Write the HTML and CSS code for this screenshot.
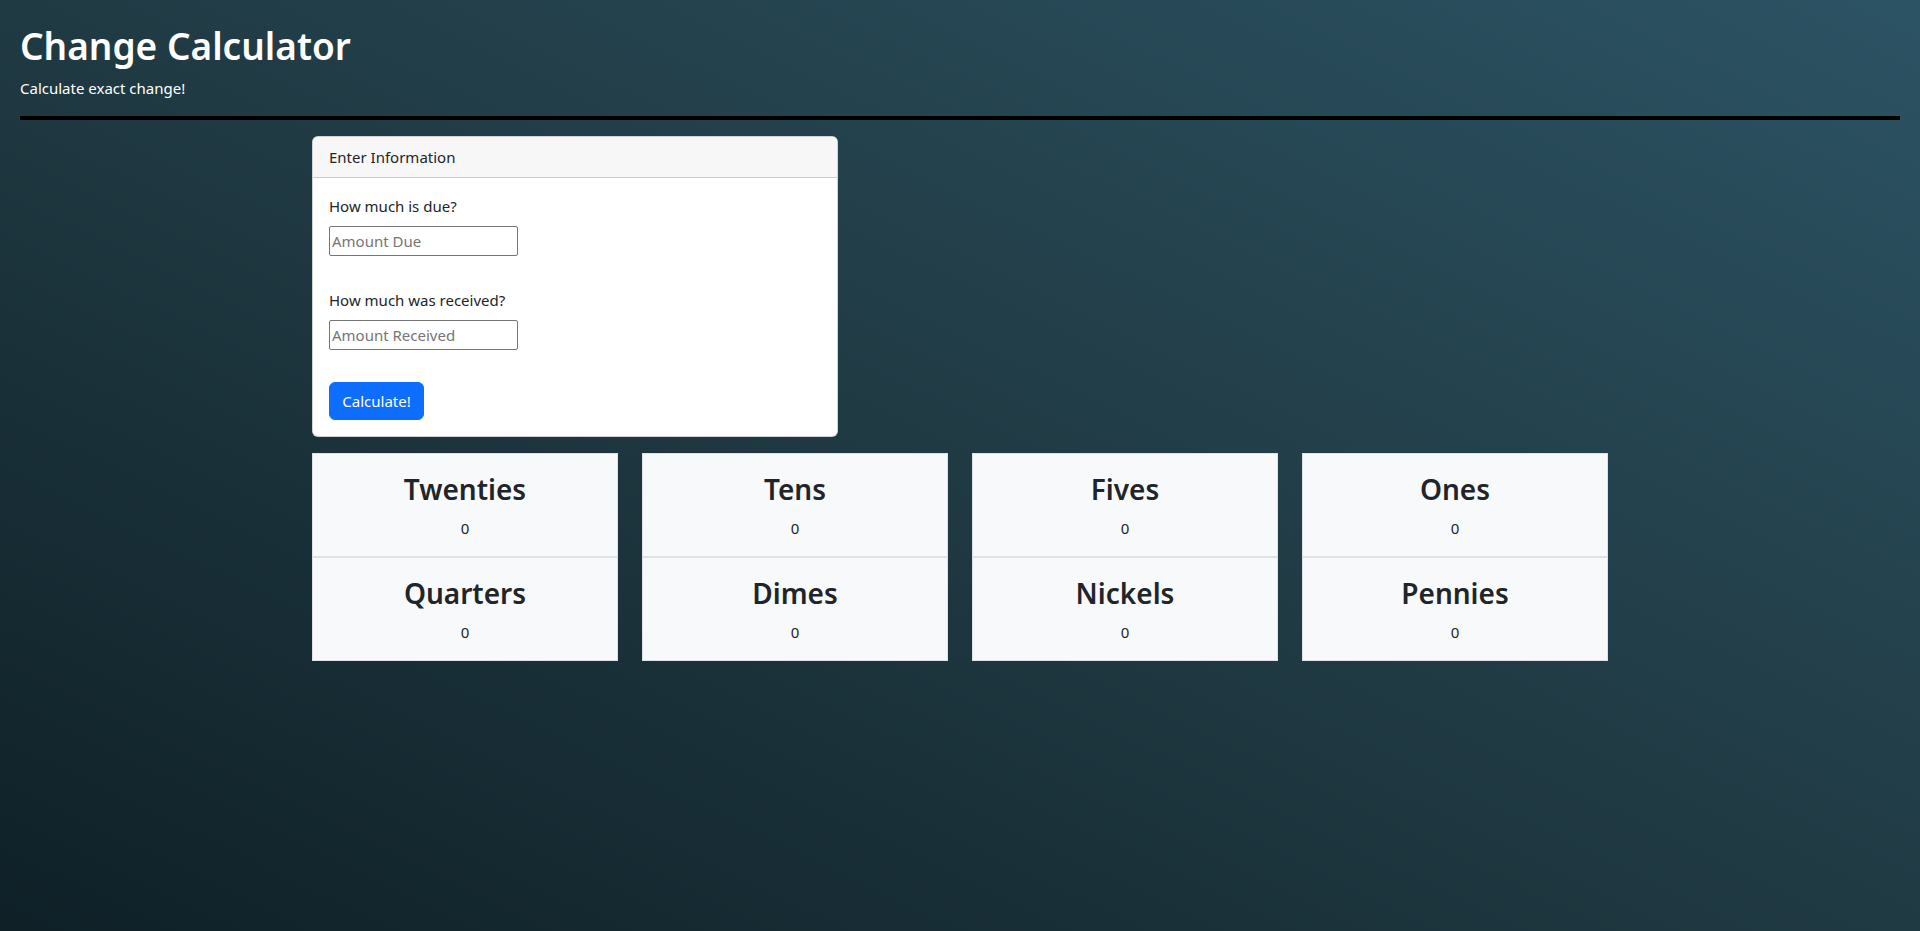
FILE: index.html
```html
<!DOCTYPE html>
<html lang="en">
<head>
<meta charset="utf-8">
<title>Change Calculator</title>
<link rel="stylesheet" href="styles.css">
</head>
<body>
<header class="page-header">
  <h1 class="title">Change Calculator</h1>
  <p class="subtitle">Calculate exact change!</p>
  <hr class="divider">
</header>
<main class="container">
  <section class="card">
    <div class="card-header">Enter Information</div>
    <div class="card-body">
      <div class="field">
        <label class="field-label" for="amountDue">How much is due?</label>
        <input class="field-input" id="amountDue" type="text" placeholder="Amount Due">
      </div>
      <div class="field">
        <label class="field-label" for="amountReceived">How much was received?</label>
        <input class="field-input" id="amountReceived" type="text" placeholder="Amount Received">
      </div>
      <button class="btn-primary" type="button">Calculate!</button>
    </div>
  </section>
  <section class="results">
    <div class="result-col">
      <div class="result-box"><h2 class="result-name">Twenties</h2><p class="result-value">0</p></div>
      <div class="result-box"><h2 class="result-name">Quarters</h2><p class="result-value">0</p></div>
    </div>
    <div class="result-col">
      <div class="result-box"><h2 class="result-name">Tens</h2><p class="result-value">0</p></div>
      <div class="result-box"><h2 class="result-name">Dimes</h2><p class="result-value">0</p></div>
    </div>
    <div class="result-col">
      <div class="result-box"><h2 class="result-name">Fives</h2><p class="result-value">0</p></div>
      <div class="result-box"><h2 class="result-name">Nickels</h2><p class="result-value">0</p></div>
    </div>
    <div class="result-col">
      <div class="result-box"><h2 class="result-name">Ones</h2><p class="result-value">0</p></div>
      <div class="result-box"><h2 class="result-name">Pennies</h2><p class="result-value">0</p></div>
    </div>
  </section>
</main>
</body>
</html>
```

FILE: styles.css
```css
* {
  box-sizing: border-box;
}

html, body {
  margin: 0;
  padding: 0;
}

body {
  min-height: 100vh;
  font-family: "Noto Sans", "Liberation Sans", sans-serif;
  font-size: 15px;
  line-height: 24px;
  color: #212529;
  background: linear-gradient(to top right, #0f2027, #203a43, #2c5364);
  background-attachment: fixed;
}

.page-header {
  padding: 22px 20px 0 20px;
  color: #ffffff;
}

.title {
  margin: 0 0 6px 0;
  font-size: 37px;
  line-height: 48px;
  font-weight: 600;
}

.subtitle {
  margin: 0 0 16px 0;
  font-size: 15px;
  line-height: 24px;
}

.divider {
  margin: 0 0 16px 0;
  height: 4px;
  border: 0;
  background: #000000;
}

.container {
  width: 1296px;
  margin: 0 auto;
}

.card {
  width: 526px;
  background: #ffffff;
  border: 1px solid rgba(0, 0, 0, 0.175);
  border-radius: 6px;
  overflow: hidden;
}

.card-header {
  padding: 8px 16px;
  background: #f7f7f7;
  border-bottom: 1px solid rgba(0, 0, 0, 0.175);
  font-size: 15px;
}

.card-body {
  padding: 16px;
}

.field {
  margin-bottom: 32px;
}

.field-label {
  display: block;
  margin-bottom: 8px;
  font-size: 15px;
}

.field-input {
  display: block;
  width: 189px;
  height: 30px;
  padding: 1px 2px;
  border: 1px solid #767676;
  border-radius: 2px;
  font-family: inherit;
  font-size: 15px;
  color: #212529;
  background: #ffffff;
}

.field-input::placeholder {
  color: #757575;
}

.btn-primary {
  display: block;
  width: 95px;
  height: 38px;
  padding: 6px 0;
  border: 1px solid #0d6efd;
  border-radius: 6px;
  background: #0d6efd;
  color: #ffffff;
  font-family: inherit;
  font-size: 15px;
  line-height: 24px;
}

.results {
  margin-top: 16px;
  display: grid;
  grid-template-columns: repeat(4, 306px);
  column-gap: 24px;
}

.result-box {
  padding: 16px;
  background: #f8f9fa;
  border: 1px solid #dee2e6;
  text-align: center;
}

.result-name {
  margin: 0 0 8px 0;
  font-size: 28px;
  line-height: 38px;
  font-weight: 600;
}

.result-value {
  margin: 0;
  font-size: 15px;
  line-height: 24px;
}
```
